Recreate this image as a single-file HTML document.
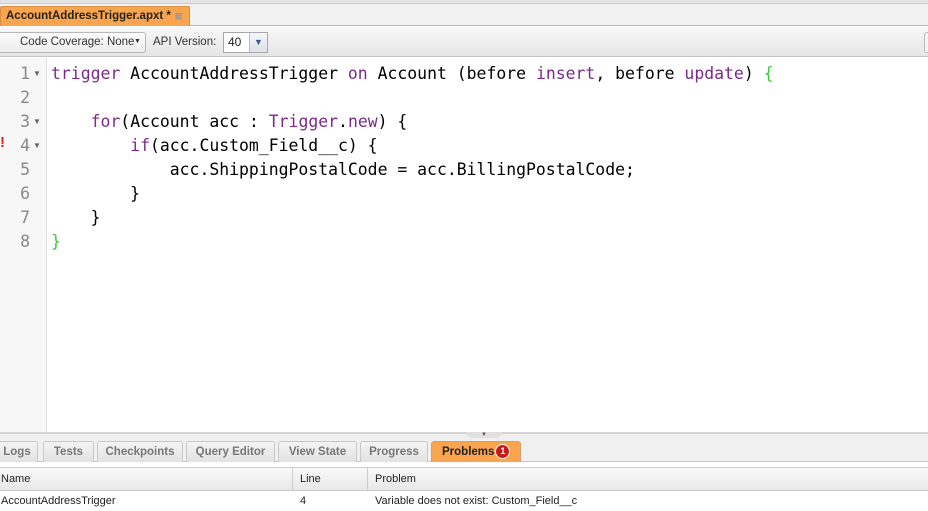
<!DOCTYPE html>
<html><head><style>
*{margin:0;padding:0;box-sizing:border-box}
body{width:928px;height:511px;overflow:hidden;background:#fff;font-family:"Liberation Sans",sans-serif;font-size:11px;color:#222;position:relative}
.abs{position:absolute}
.code{font-family:"DejaVu Sans Mono",monospace;font-size:16.45px;white-space:pre;line-height:24px;color:#000}
.k{color:#7b2a8b}.g{color:#3cc83c}
.ln{color:#888;font-family:"DejaVu Sans Mono",monospace;font-size:16.5px;line-height:24px;text-align:right}
.tab{position:absolute;top:441px;height:21px;border:1px solid #c8c8c8;border-bottom:none;border-radius:3px 3px 0 0;background:linear-gradient(#f4f4f4,#e2e2e2);font-weight:bold;color:#777;font-size:11.5px;text-align:center;line-height:20px}
</style></head><body>
<div class="abs" style="left:0;top:0;width:928px;height:4px;background:#e4e4e4;border-bottom:1px solid #ccc"></div>
<div class="abs" style="left:0;top:4px;width:928px;height:22px;background:#f2f2f2;border-bottom:1px solid #bbb"></div>
<div class="abs" style="left:0;top:6px;width:190px;height:20px;background:#f9a54f;border:1px solid #d89040;border-bottom:none;border-radius:2px 2px 0 0;font-weight:bold;font-size:11.5px;line-height:19px;padding-left:5px;color:#222;white-space:nowrap;overflow:hidden">AccountAddressTrigger.apxt *<span style="color:#999;font-size:9px;margin-left:4px">⊠</span></div>
<div class="abs" style="left:0;top:27px;width:928px;height:30px;background:linear-gradient(#f8f8f8,#e6e6e6);border-bottom:1px solid #c4c4c4"></div>
<div class="abs" style="left:-5px;top:32px;width:151px;height:21px;border:1px solid #b8b8b8;border-radius:3px;background:linear-gradient(#fdfdfd,#ececec);line-height:19px;padding-left:24px;color:#333;font-size:11.5px;white-space:nowrap">Code Coverage: None</div>
<div class="abs" style="left:134px;top:38px;font-size:7px;color:#333">▼</div>
<div class="abs" style="left:153px;top:36px;color:#333;font-size:11.5px">API Version:</div>
<div class="abs" style="left:223px;top:32px;width:45px;height:21px;border:1px solid #a8a8a8;background:#fff;line-height:19px;padding-left:4px;font-size:12px">40</div>
<div class="abs" style="left:249px;top:33px;width:18px;height:19px;background:linear-gradient(#f4f6fa,#dde2ea);border-left:1px solid #bbb;color:#3a5a8a;font-size:9px;text-align:center;line-height:19px">▼</div>
<div class="abs" style="left:924px;top:32px;width:6px;height:21px;border:1px solid #bbb;border-radius:3px;background:#f5f5f5"></div>
<div class="abs" style="left:0;top:58px;width:47px;height:374px;background:#f7f7f7;border-right:1px solid #e0e0e0"></div>
<div class="abs ln" style="left:0;top:62px;width:30px">1<br>2<br>3<br>4<br>5<br>6<br>7<br>8</div>
<div class="abs" style="left:33px;top:62px;font-size:8px;line-height:24px;color:#666">▼<br><br>▼<br>▼</div>
<div class="abs" style="left:0;top:134px;color:#e02020;font-weight:bold;font-size:15px">!</div>
<div class="abs code" style="left:51px;top:62px"><span class="k">trigger</span> AccountAddressTrigger <span class="k">on</span> Account (before <span class="k">insert</span>, before <span class="k">update</span>) <span class="g">{</span>

    <span class="k">for</span>(Account acc : <span class="k">Trigger</span>.<span class="k">new</span>) {
        <span class="k">if</span>(acc.Custom_Field__c) {
            acc.ShippingPostalCode = acc.BillingPostalCode;
        }
    }
<span class="g">}</span></div>
<div class="abs" style="left:0;top:432px;width:928px;height:30px;background:#f0f0f0;border-top:2px solid #d4d4d4"></div>
<div class="abs" style="left:466px;top:432px;width:36px;height:6px;background:#e0e0e0;border-radius:0 0 8px 8px;font-size:6px;text-align:center;line-height:6px;color:#555">▼</div>
<div class="abs" style="left:0;top:461px;width:928px;height:1px;background:#c8c8c8"></div>
<div class="tab" style="left:-4px;width:42px">Logs</div>
<div class="tab" style="left:43px;width:51px">Tests</div>
<div class="tab" style="left:97px;width:86px">Checkpoints</div>
<div class="tab" style="left:186px;width:89px">Query Editor</div>
<div class="tab" style="left:278px;width:79px">View State</div>
<div class="tab" style="left:360px;width:68px">Progress</div>
<div class="tab" style="left:431px;width:90px;background:#f9a54f;border-color:#d0a070;color:#222;text-align:left;padding-left:10px;white-space:nowrap">Problems<span style="display:inline-block;width:15px;height:15px;border-radius:50%;background:#c41a1a;border:1px solid #fff;color:#fff;font-size:9px;line-height:13px;text-align:center;vertical-align:middle;margin-left:1px">1</span></div>
<div class="abs" style="left:0;top:467px;width:928px;height:24px;background:linear-gradient(#f9f9f9,#e8e8e8);border-top:1px solid #d0d0d0;border-bottom:1px solid #c8c8c8"></div>
<div class="abs" style="left:292px;top:468px;width:1px;height:22px;background:#ccc"></div>
<div class="abs" style="left:367px;top:468px;width:1px;height:22px;background:#ccc"></div>
<div class="abs" style="left:1px;top:473px">Name</div>
<div class="abs" style="left:300px;top:473px">Line</div>
<div class="abs" style="left:375px;top:473px">Problem</div>
<div class="abs" style="left:1px;top:495px">AccountAddressTrigger</div>
<div class="abs" style="left:300px;top:495px">4</div>
<div class="abs" style="left:375px;top:495px">Variable does not exist: Custom_Field__c</div>
</body></html>
